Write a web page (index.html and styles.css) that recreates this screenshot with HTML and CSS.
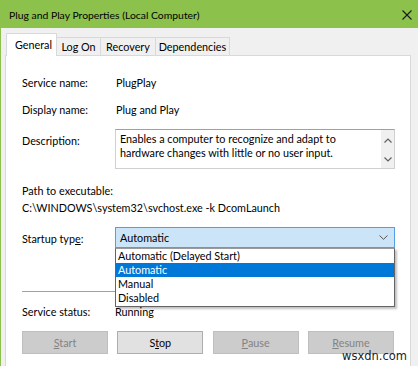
FILE: index.html
```html
<!DOCTYPE html>
<html>
<head>
<meta charset="utf-8">
<link rel="stylesheet" href="styles.css">
</head>
<body>
<div class="window">
  <div class="titlebar">
    <span class="title">Plug and Play Properties (Local Computer)</span>
    <svg class="close" width="10" height="10" viewBox="0 0 10 10"><path d="M0.5 0.5L9.5 9.5M9.5 0.5L0.5 9.5" stroke="#1a1a1a" stroke-width="1.1" fill="none"/></svg>
  </div>
  <div class="tabs">
    <div class="tab active t-general">General</div>
    <div class="tab t-logon">Log On</div>
    <div class="tab t-recovery">Recovery</div>
    <div class="tab t-deps">Dependencies</div>
  </div>
  <div class="panel">
    <div class="row r-service"><span class="label">Service name:</span><span class="value">PlugPlay</span></div>
    <div class="row r-display"><span class="label">Display name:</span><span class="value">Plug and Play</span></div>
    <div class="row r-desc">
      <span class="label">Description:</span>
      <div class="descbox">
        <div class="desctext">Enables a computer to recognize and adapt to hardware changes with little or no user input.</div>
        <div class="vscroll">
          <svg width="8" height="5" viewBox="0 0 8 5"><path d="M0.5 4.5L4 1L7.5 4.5" stroke="#606060" stroke-width="1.2" fill="none"/></svg>
          <svg width="8" height="5" viewBox="0 0 8 5"><path d="M0.5 0.5L4 4L7.5 0.5" stroke="#606060" stroke-width="1.2" fill="none"/></svg>
        </div>
      </div>
    </div>
    <div class="pathlabel">Path to executable:</div>
    <div class="pathvalue">C:\WINDOWS\system32\svchost.exe -k DcomLaunch</div>
    <div class="row r-startup">
      <span class="label">Startup typ<u>e</u>:</span>
      <div class="combowrap">
        <div class="combo">
          <span>Automatic</span>
          <svg width="9" height="5" viewBox="0 0 9 5"><path d="M0.5 0.5L4.5 4.3L8.5 0.5" stroke="#555" stroke-width="1" fill="none"/></svg>
        </div>
        <div class="dropdown">
          <div class="opt">Automatic (Delayed Start)</div>
          <div class="opt sel">Automatic</div>
          <div class="opt">Manual</div>
          <div class="opt">Disabled</div>
        </div>
      </div>
    </div>
    <div class="sep"></div>
    <div class="row r-status"><span class="label">Service status:</span><span class="value">Running</span></div>
    <div class="buttons">
      <div class="btn disabled"><u>S</u>tart</div>
      <div class="btn">S<u>t</u>op</div>
      <div class="btn disabled"><u>P</u>ause</div>
      <div class="btn disabled"><u>R</u>esume</div>
    </div>
  </div>
  <div class="watermark">wsxdn.com</div>
</div>
</body>
</html>
```
FILE: styles.css
```css
html, body {
  margin: 0;
  padding: 0;
}
body {
  width: 418px;
  height: 366px;
  overflow: hidden;
  background: #f0f0f0;
  font-family: "Lato", "Noto Sans", sans-serif;
  font-size: 10.8px;
  color: #000;
}
.window {
  position: relative;
  width: 417px;
  height: 366px;
  border-left: 1px solid #8cc14c;
  overflow: hidden;
}
.titlebar {
  height: 28px;
  background: #8cc14c;
  display: flex;
  align-items: center;
  justify-content: space-between;
  padding: 0 6px 0 8px;
}
.title {
  font-size: 10.4px;
  color: #000;
  padding-top: 1px;
}
.close {
  margin-top: 1px;
}
.tabs {
  display: flex;
  align-items: flex-end;
  padding: 5px 0 0 5px;
  height: 22px;
  position: relative;
  z-index: 2;
}
.tab {
  height: 18px;
  line-height: 18px;
  border: 1px solid #d9d9d9;
  border-bottom: none;
  border-left: none;
  background: #f0f0f0;
  box-sizing: border-box;
  text-align: center;
}
.tab.active {
  height: 23px;
  line-height: 21px;
  background: #fff;
  border-left: 1px solid #d9d9d9;
  margin-bottom: -1px;
  text-align: left;
  padding-left: 8px;
}
.t-general { width: 51px; }
.t-logon { width: 44px; }
.t-recovery { width: 55px; }
.t-deps { width: 74px; }
.panel {
  margin-left: 4px;
  width: 406px;
  height: 320px;
  background: #fff;
  border: 1px solid #d9d9d9;
  padding-left: 16px;
  box-sizing: border-box;
  position: relative;
}
.row {
  display: flex;
  align-items: center;
}
.label {
  width: 94px;
  flex: none;
}
.r-service { margin-top: 18px; height: 16px; }
.r-display { margin-top: 11px; height: 16px; }
.r-desc { margin-top: 12px; align-items: flex-start; }
.r-desc .label { margin-top: 5px; }
.descbox {
  width: 278px;
  height: 38px;
  border: 1px solid #d0d0d0;
  border-top-color: #a0a0a0;
  box-sizing: content-box;
  display: flex;
  margin-left: -1px;
}
.desctext {
  flex: 1;
  padding: 2px 4px;
  line-height: 14px;
}
.vscroll {
  width: 13px;
  background: #f0f0f0;
  display: flex;
  flex-direction: column;
  align-items: center;
  justify-content: space-between;
  padding: 8px 0 6px;
  box-sizing: border-box;
}
.pathlabel { margin-top: 14px; height: 16px; line-height: 16px; }
.pathvalue { margin-top: 1px; height: 16px; line-height: 16px; }
.r-startup { margin-top: 11px; }
.r-startup .label { margin-top: 1px; }
.combowrap {
  position: relative;
  margin-left: -1px;
}
.combo {
  width: 268px;
  height: 19px;
  border: 1px solid #569de5;
  background: #cce4f7;
  display: flex;
  align-items: center;
  justify-content: space-between;
  padding: 0 6px 0 4px;
  box-sizing: content-box;
}
.dropdown {
  position: absolute;
  top: 21px;
  left: 0;
  width: 278px;
  border: 1px solid #646464;
  border-top: 1px solid #9a9a9a;
  background: #fff;
  box-shadow: 2px 2px 2px rgba(0,0,0,0.25);
  z-index: 5;
  padding-bottom: 1px;
}
.opt {
  height: 14px;
  line-height: 14px;
  padding-left: 2px;
}
.opt.sel {
  background: #0078d7;
  color: #fff;
}
.sep {
  margin-top: 43px;
  width: 372px;
  height: 1px;
  background: #a0a0a0;
}
.r-status { margin-top: 11px; height: 16px; }
.r-status .value { margin-left: -1px; }
.buttons {
  margin-top: 12px;
  width: 372px;
  display: flex;
  justify-content: space-between;
}
.btn {
  width: 86px;
  height: 23px;
  box-sizing: border-box;
  border: 1px solid #adadad;
  background: #e1e1e1;
  text-align: center;
  line-height: 21px;
}
.btn.disabled {
  background: #cccccc;
  border-color: #bfbfbf;
  color: #838383;
}
.watermark {
  position: absolute;
  right: 11px;
  bottom: 3px;
  line-height: 14px;
  font-family: "DejaVu Sans", sans-serif;
  font-size: 11.5px;
  color: #222;
}
```
